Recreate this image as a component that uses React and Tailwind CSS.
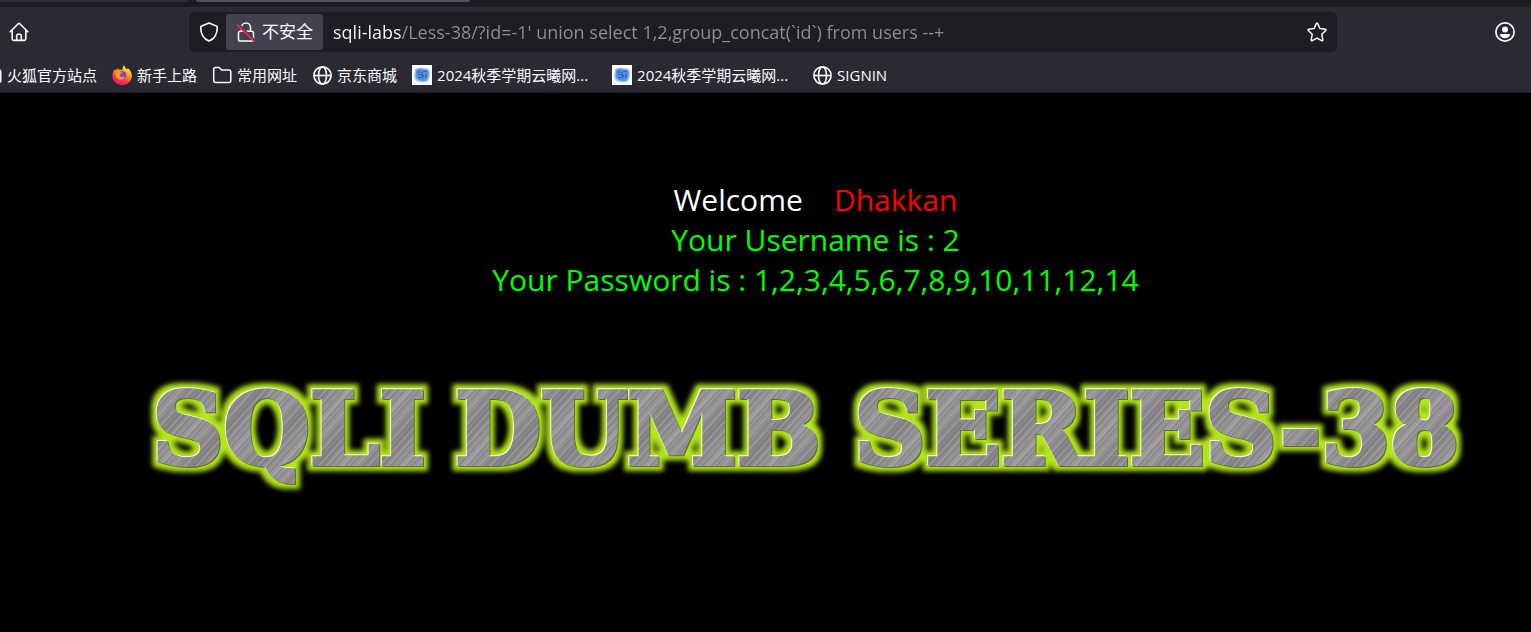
// src/App.jsx
import React from 'react';

const HomeIcon = () => (
  <svg viewBox="0 0 20 20" className="h-5 w-5" fill="none" stroke="currentColor" strokeWidth="1.6" strokeLinejoin="round" strokeLinecap="round" aria-hidden="true">
    <path d="M1.2 9.8 9.2 1.7q.8-.7 1.6 0l8 8.1M3.2 8.2v8.6q0 1.6 1.6 1.6h10.4q1.6 0 1.6-1.6V8.2M7.7 18v-4.2q0-1.6 1.6-1.6h1.4q1.6 0 1.6 1.6V18" />
  </svg>
);

const ShieldIcon = () => (
  <svg viewBox="0 0 20 20" className="h-5 w-5" fill="none" stroke="currentColor" strokeWidth="1.6" strokeLinejoin="round" aria-hidden="true">
    <path d="M10 1 17.3 3.9q1 .4 1 1.5C18.3 11 16 16.500 10 19 4 16.500 1.700 11 1.700 5.400q0-1.100 1-1.500z" />
  </svg>
);

const InsecureLockIcon = () => (
  <svg viewBox="0 0 20 20" className="h-5 w-5" fill="none" strokeLinecap="round" aria-hidden="true">
    <path d="M5.500 9V5.500a4.500 4.500 0 0 1 9 0V9M4.300 9.200h11.400q1.800 0 1.800 1.800v6.200q0 1.800-1.800 1.800H4.300q-1.800 0-1.800-1.800V11q0-1.800 1.800-1.800z" stroke="#fbfbfe" strokeWidth="1.500" />
    <path d="M3 3 18.500 18" stroke="#42414d" strokeWidth="2" />
    <path d="M1.500 3 18 19" stroke="#e22850" strokeWidth="1.800" />
  </svg>
);

const StarIcon = () => (
  <svg viewBox="0 0 20 20" className="h-5 w-5" fill="none" stroke="currentColor" strokeWidth="1.5" strokeLinejoin="round" aria-hidden="true">
    <path d="M9.300 1.600q.7-1.100 1.400 0l2.200 4.900 5.300.7q1.300.3.500 1.300l-3.900 3.800 1 5.600q.1 1.300-1.100.8L10 16.100l-4.700 2.600q-1.200.5-1.100-.8l1-5.600-3.900-3.800q-.8-1 .5-1.300l5.300-.7z" />
  </svg>
);

const AccountIcon = () => (
  <svg viewBox="0 0 20 20" className="h-5 w-5" fill="currentColor" aria-hidden="true">
    <circle cx="10" cy="10" r="9.100" fill="none" stroke="currentColor" strokeWidth="1.700" />
    <circle cx="10" cy="7.600" r="3" />
    <path d="M5.600 12h8.800q1 0 .7 1c-1 2.200-2.900 3.300-5.100 3.300S5.900 15.200 4.900 13q-.3-1 .7-1z" />
  </svg>
);

const FolderIcon = () => (
  <svg viewBox="0 0 20 20" className="h-5 w-5 shrink-0" fill="none" stroke="currentColor" strokeWidth="1.5" strokeLinejoin="round" aria-hidden="true">
    <path d="M1.700 4.500q0-2 2-2h3.500l2.300 2.400h7.300q2 0 2 2v8.600q0 2-2 2H3.700q-2 0-2-2z" />
  </svg>
);

const GlobeIcon = () => (
  <svg viewBox="0 0 20 20" className="h-5 w-5 shrink-0" fill="none" stroke="currentColor" strokeWidth="1.600" aria-hidden="true">
    <circle cx="10.500" cy="10.500" r="8.600" />
    <ellipse cx="10.500" cy="10.500" rx="4" ry="8.600" />
    <path d="M2 10.500h17" />
  </svg>
);

const FirefoxIcon = () => (
  <svg viewBox="0 0 20 20" className="h-5 w-5 shrink-0" aria-hidden="true">
    <defs>
      <linearGradient id="fox-body" x1="0.8" y1="0" x2="0.25" y2="1">
        <stop offset="0.1" stopColor="#fff44f" />
        <stop offset="0.4" stopColor="#ff980e" />
        <stop offset="0.7" stopColor="#ff3647" />
        <stop offset="1" stopColor="#e31587" />
      </linearGradient>
      <radialGradient id="fox-globe">
        <stop offset="0" stopColor="#6f4fe8" />
        <stop offset="1" stopColor="#9a35c8" />
      </radialGradient>
    </defs>
    <path d="M12.200 0c.2 2.200 1.600 3 2.900 4.300.4-.1.700-.5.700-1 2.500 1.900 4 4.500 4 7.600 0 5-4.300 9-9.700 9S.4 15.900.4 10.700c0-2.900 1-5.200 2.500-6.800l.2 1.700c.9-.7 1.500-1.600 3.300-2.300-.2.700 0 1.300.2 1.600 1.500-.6 2.800-.3 3.900.2C10.500 3.200 11 1.300 12.200 0z" fill="url(#fox-body)" />
    <circle cx="10" cy="10.300" r="4.300" fill="url(#fox-globe)" />
    <path d="M3 6.500C5 5 7.200 5.400 8.500 6.600l2 .3c-.2 1.200-2 1.300-2.300 1.800-.4.900-.7 1.700 0 2.500 1.500 1.600 3.300.2 4.700.8-1 2-3 3-5.200 2.500C4.500 14 2.600 10 3 6.500z" fill="#ff9a1a" />
  </svg>
);

const CloudIcon = () => (
  <svg viewBox="0 0 20 20" className="h-5 w-5 shrink-0" aria-hidden="true">
    <path d="M0 0h20v20H0z" fill="#fff" />
    <path d="M3 4q3-2 7-1.500T17 4q2 3 1 7t-2 5q-3 2-6 1.500T4 16q-2.500-3-2-6.500T3 4z" fill="#a9cdf8" />
    <path d="M4 5q3-2 6-1t6 1q1.500 3 .5 6T15 15.500q-3 1-5.500.5T5 14q-2-2-1.500-4.500T4 5z" fill="#5794e6" />
    <path d="M5 7h4M11 6l4 1M6 9.500h3M10 9l2 3M14 9v4M6 12l3 1M10 7v6" stroke="#2a5cab" strokeWidth="1.200" fill="none" />
  </svg>
);

const bookmarks = [
  { name: '火狐官方站点', icon: FolderIcon },
  { name: '新手上路', icon: FirefoxIcon },
  { name: '常用网址', icon: FolderIcon },
  { name: '京东商城', icon: GlobeIcon },
  { name: '2024秋季学期云曦网...', icon: CloudIcon, wide: true },
  { name: '2024秋季学期云曦网...', icon: CloudIcon, wide: true },
  { name: 'SIGNIN', icon: GlobeIcon },
];

const TabStrip = () => (
  <div className="flex h-[7px] items-start gap-2 bg-[#1c1b22]">
    <div className="h-[2px] w-[188px] rounded-b-sm bg-[#2f2e37]" />
    <div className="h-[2px] w-[274px] rounded-b-sm bg-[#52525e]" />
  </div>
);

const Toolbar = () => (
  <div className="flex h-[50px] items-center bg-[#2b2a33] pr-4 pl-[9px]">
    <button type="button" aria-label="Home">
      <HomeIcon />
    </button>
    <div className="ml-40 flex h-10 flex-1 items-center rounded-md bg-[#1e1d24] pr-[10px] pl-[10px]">
      <button type="button" aria-label="Tracking protection">
        <ShieldIcon />
      </button>
      <button type="button" className="ml-[7px] flex h-9 items-center gap-[6px] rounded bg-[#42414d] px-[10px] text-[17px]">
        <InsecureLockIcon />
        不安全
      </button>
      {/* the host part is brighter than the path */}
      <input
        type="text"
        aria-label="Address"
        defaultValue="sqli-labs/Less-38/?id=-1' union select 1,2,group_concat(`id`) from users --+"
        className="ml-[10px] h-9 min-w-0 flex-1 bg-[linear-gradient(90deg,#fbfbfe_69px,#8f8f96_69px)] bg-clip-text text-[18px] text-transparent outline-none"
      />
      <button type="button" aria-label="Bookmark this page">
        <StarIcon />
      </button>
    </div>
    <button type="button" aria-label="Account" className="ml-[158px]">
      <AccountIcon />
    </button>
  </div>
);

const BookmarksBar = () => (
  <nav className="overflow-hidden border-b border-[#1c1b22] bg-[#2b2a33]">
    <ul className="-ml-[18px] flex h-[35px] items-center gap-[15px] text-[15px] leading-5">
      {bookmarks.map((item, i) => (
        <li key={i} className={item.wide ? 'w-[185px] shrink-0' : 'shrink-0'}>
          <a href="#" className="flex items-center gap-[5px] whitespace-nowrap">
            <item.icon />
            {item.name}
          </a>
        </li>
      ))}
    </ul>
  </nav>
);

const SeriesLogo = () => (
  <svg viewBox="0 0 1350 130" className="w-full max-w-[1350px]" role="img" aria-label="SQLI DUMB SERIES-38">
    <defs>
      <linearGradient id="steel" x1="0" y1="0" x2="1" y2="0">
        <stop offset="0" stopColor="#929093" />
        <stop offset="0.3" stopColor="#858386" />
        <stop offset="0.7" stopColor="#9d9b9e" />
        <stop offset="1" stopColor="#929093" />
      </linearGradient>
      <pattern id="brushed" width="61" height="130" patternUnits="userSpaceOnUse" patternTransform="skewX(-42)">
        <rect width="61" height="130" fill="url(#steel)" />
        <path d="M4 0v130M11 0v130M17 0v130M23 0v130M31 0v130M38 0v130M47 0v130M52 0v130" stroke="#7b797c" strokeWidth="1" />
        <path d="M9 0v130M20 0v130M28 0v130M44 0v130M58 0v130" stroke="#adabae" strokeWidth="1" />
      </pattern>
      <filter id="glow" x="-20" y="-20" width="1390" height="170" filterUnits="userSpaceOnUse" colorInterpolationFilters="sRGB">
        <feMorphology in="SourceAlpha" operator="dilate" radius="5" result="fat" />
        <feGaussianBlur in="fat" stdDeviation="2.500" result="soft" />
        <feFlood floodColor="#b2e51c" />
        <feComposite in2="soft" operator="in" result="halo" />
        <feOffset in="SourceAlpha" dx="-1" dy="-1" result="upper" />
        <feFlood floodColor="#f6fbdc" />
        <feComposite in2="upper" operator="in" result="light" />
        <feOffset in="SourceAlpha" dx="1" dy="1" result="lower" />
        <feFlood floodColor="#5f7420" />
        <feComposite in2="lower" operator="in" result="shade" />
        <feMerge>
          <feMergeNode in="halo" />
          <feMergeNode in="shade" />
          <feMergeNode in="light" />
          <feMergeNode in="SourceGraphic" />
        </feMerge>
      </filter>
    </defs>
    <g
      filter="url(#glow)"
      fill="url(#brushed)"
      stroke="url(#brushed)"
      strokeWidth="4"
      className="font-['DejaVu_Serif',serif] text-[99px] font-bold"
    >
      <text x="11" y="94">SQLI</text>
      <text x="314" y="94">DUMB</text>
      <text x="713" y="94">SERIES-38</text>
    </g>
  </svg>
);

const App = () => {
  return (
    <div className="min-h-screen bg-black font-['Open_Sans','Noto_Sans_CJK_SC',sans-serif] text-[#fbfbfe]">
      <header>
        <TabStrip />
        <Toolbar />
        <BookmarksBar />
      </header>

      <main className="flex flex-col items-center pt-[87px] pl-[100px]">
        <div className="text-center text-[30px] leading-10 text-[#00ff00]">
          <p className="text-white">
            Welcome&nbsp;&nbsp;&nbsp;&nbsp;<span className="text-[#ff0000]">Dhakkan</span>
          </p>
          <p>Your Username is : 2</p>
          <p>Your Password is : 1,2,3,4,5,6,7,8,9,10,11,12,14</p>
        </div>
        <div className="mt-[70px] flex w-full justify-center">
          <SeriesLogo />
        </div>
      </main>
    </div>
  );
};

export default App;
